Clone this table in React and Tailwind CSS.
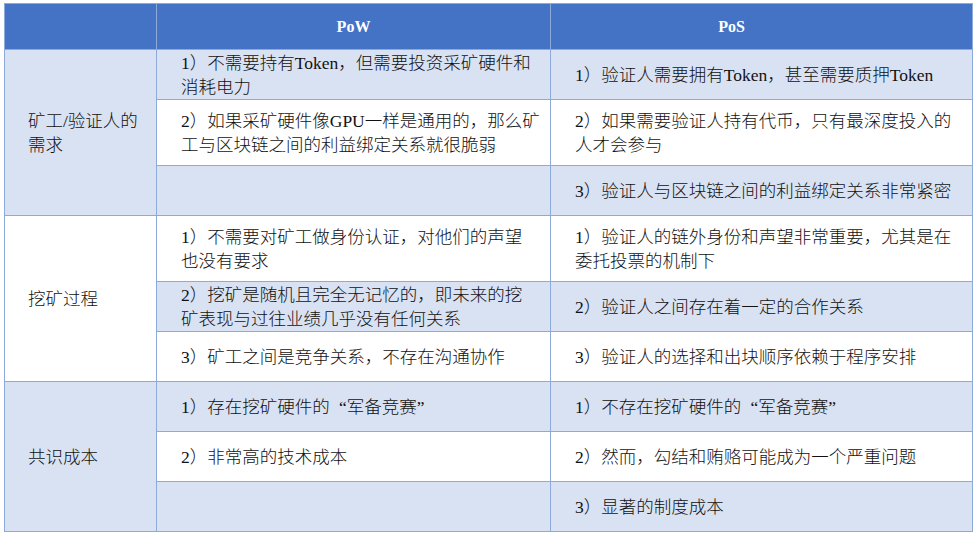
const groups = [
  {
    title: ["矿工/验证人的", "需求"],
    light: true,
    rows: [
      {
        h: "h-[50px]",
        light: true,
        pow: ["1）不需要持有Token，但需要投资采矿硬件和", "消耗电力"],
        pos: ["1）验证人需要拥有Token，甚至需要质押Token"],
      },
      {
        h: "h-[66px]",
        light: false,
        pow: ["2）如果采矿硬件像GPU一样是通用的，那么矿", "工与区块链之间的利益绑定关系就很脆弱"],
        pos: ["2）如果需要验证人持有代币，只有最深度投入的", "人才会参与"],
      },
      {
        h: "h-[50px]",
        light: true,
        pow: [],
        pos: ["3）验证人与区块链之间的利益绑定关系非常紧密"],
      },
    ],
  },
  {
    title: ["挖矿过程"],
    light: false,
    rows: [
      {
        h: "h-[66px]",
        light: false,
        pow: ["1）不需要对矿工做身份认证，对他们的声望", "也没有要求"],
        pos: ["1）验证人的链外身份和声望非常重要，尤其是在", "委托投票的机制下"],
      },
      {
        h: "h-[50px]",
        light: true,
        pow: ["2）挖矿是随机且完全无记忆的，即未来的挖", "矿表现与过往业绩几乎没有任何关系"],
        pos: ["2）验证人之间存在着一定的合作关系"],
      },
      {
        h: "h-[50px]",
        light: false,
        pow: ["3）矿工之间是竞争关系，不存在沟通协作"],
        pos: ["3）验证人的选择和出块顺序依赖于程序安排"],
      },
    ],
  },
  {
    title: ["共识成本"],
    light: true,
    rows: [
      {
        h: "h-[50px]",
        light: true,
        pow: ["1）存在挖矿硬件的“军备竞赛”"],
        pos: ["1）不存在挖矿硬件的“军备竞赛”"],
      },
      {
        h: "h-[50px]",
        light: false,
        pow: ["2）非常高的技术成本"],
        pos: ["2）然而，勾结和贿赂可能成为一个严重问题"],
      },
      {
        h: "h-[50px]",
        light: true,
        pow: [],
        pos: ["3）显著的制度成本"],
      },
    ],
  },
];

// quotes are full width in the original, so give them their own box
function Line({ text }) {
  const parts = text.split(/([“”])/);
  return (
    <div className="whitespace-nowrap">
      {parts.map((p, i) =>
        p === "“" ? (
          <span key={i} className="inline-block w-[17px] text-right">“</span>
        ) : p === "”" ? (
          <span key={i} className="inline-block w-[17px] text-left">”</span>
        ) : (
          p
        )
      )}
    </div>
  );
}

function Lines({ lines }) {
  return lines.map((l) => <Line key={l} text={l} />);
}

export default function App() {
  return (
    <main className="w-[976px] h-[536px] bg-white pt-[3px] pl-[4px] overflow-hidden font-['Liberation_Serif','Noto_Sans_CJK_SC',serif] text-[17.5px] leading-[24px] text-[#111] font-light">
      <table className="table-fixed border-collapse w-[968px]">
        <colgroup>
          <col className="w-[152px]" />
          <col className="w-[394px]" />
          <col className="w-[422px]" />
        </colgroup>
        <thead>
          <tr className="h-[46px] bg-[#4472C4] text-white font-bold text-[16px]">
            <th className="border border-[#8EAADB]"></th>
            <th className="border border-[#8EAADB] text-center">PoW</th>
            <th className="border border-[#8EAADB] text-center pr-[60px]">PoS</th>
          </tr>
        </thead>
        <tbody>
          {groups.map((g) =>
            g.rows.map((r, i) => (
              <tr key={g.title[0] + i} className={r.h}>
                {i === 0 && (
                  <td
                    rowSpan={3}
                    className={`border border-[#8EAADB] pl-[23px] align-middle ${
                      g.light ? "bg-[#D9E2F3]" : "bg-white"
                    }`}
                  >
                    <Lines lines={g.title} />
                  </td>
                )}
                <td
                  className={`border border-[#8EAADB] pl-6 align-middle ${
                    r.light ? "bg-[#D9E2F3]" : "bg-white"
                  }`}
                >
                  <Lines lines={r.pow} />
                </td>
                <td
                  className={`border border-[#8EAADB] pl-6 align-middle ${
                    r.light ? "bg-[#D9E2F3]" : "bg-white"
                  }`}
                >
                  <Lines lines={r.pos} />
                </td>
              </tr>
            ))
          )}
        </tbody>
      </table>
    </main>
  );
}
